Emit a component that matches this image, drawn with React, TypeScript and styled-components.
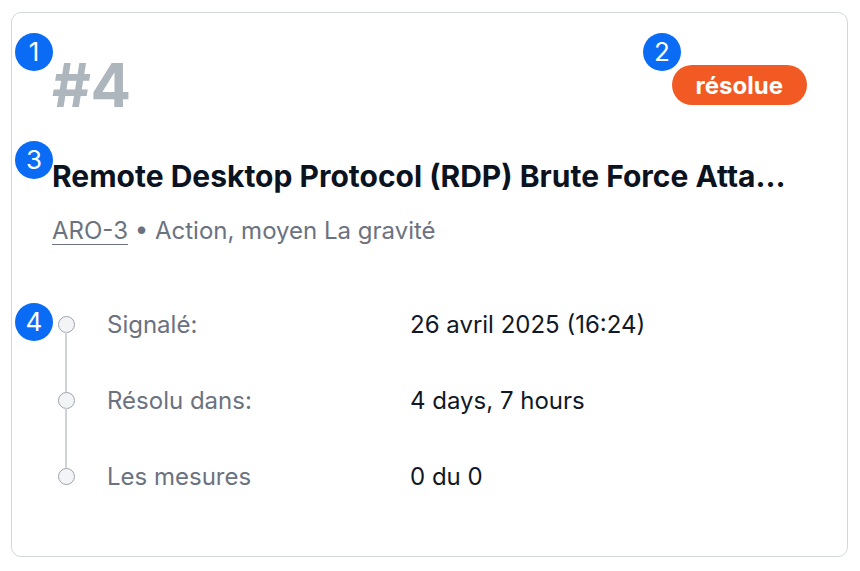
import React from "react"
import styled, { createGlobalStyle } from "styled-components"

const GlobalStyle = createGlobalStyle`
  * { box-sizing: border-box; }
  body {
    margin: 0;
    background: #fff;
    font-family: Inter, "Noto Sans", sans-serif;
  }
`

const Page = styled.div`
  padding: 12px 12px 14px 11px;
`

const Card = styled.article`
  position: relative;
  height: 545px;
  border: 1px solid #d4d7db;
  border-radius: 10px;
  background: #fff;
  padding: 42px 40px 40px 40px;
`

const Header = styled.div`
  display: flex;
  align-items: center;
  justify-content: space-between;
`

const Number = styled.div`
  font-size: 60px;
  line-height: 1;
  font-weight: 700;
  color: #adb5bd;
  letter-spacing: -0.5px;
`

const Status = styled.span`
  display: inline-flex;
  align-items: center;
  height: 40px;
  padding: 0 24px;
  border-radius: 20px;
  background: #f25a24;
  color: #fff;
  font-size: 24px;
  font-weight: 700;
`

const Title = styled.h2`
  margin: 44px 0 0;
  padding-right: 16px;
  font-size: 30px;
  line-height: 35px;
  font-weight: 700;
  color: #0b1220;
  white-space: nowrap;
  overflow: hidden;
  text-overflow: ellipsis;
`

const Meta = styled.p`
  margin: 22px 0 0;
  font-size: 24px;
  line-height: 30px;
  color: #6b7280;
`

const Ref = styled.a`
  color: #6b7280;
  text-decoration: underline;
  text-underline-offset: 5px;
  text-decoration-thickness: 1px;
`

const Timeline = styled.div`
  margin-top: 40px;
`

const Row = styled.div`
  display: grid;
  grid-template-columns: 17px 271px 1fr;
  column-gap: 32px;
  align-items: center;
  height: 76px;
  padding-left: 6px;
  font-size: 24px;
`

const Dot = styled.span<{ $last?: boolean }>`
  position: relative;
  width: 17px;
  height: 17px;
  border: 1.5px solid #9ca3af;
  border-radius: 50%;
  background: #f3f4f6;

  &::after {
    content: "";
    display: ${(p) => (p.$last ? "none" : "block")};
    position: absolute;
    left: 6px;
    top: 15.5px;
    width: 2px;
    height: 60px;
    background: #cfd3d8;
  }
`

const Label = styled.span`
  color: #6b7280;
`

const Value = styled.span`
  color: #111827;
`

const Marker = styled.span<{ $x: number; $y: number }>`
  position: absolute;
  left: ${(p) => p.$x}px;
  top: ${(p) => p.$y}px;
  width: 38px;
  height: 38px;
  border-radius: 50%;
  background: #0a6cf5;
  color: #fff;
  font-size: 26px;
  line-height: 38px;
  text-align: center;
  z-index: 2;
`

const rows = [
  { label: "Signalé:", value: "26 avril 2025 (16:24)" },
  { label: "Résolu dans:", value: "4 days, 7 hours" },
  { label: "Les mesures", value: "0 du 0" },
]

export default function App() {
  return (
    <Page>
      <GlobalStyle />
      <Card>
        <Header>
          <Number>#4</Number>
          <Status>résolue</Status>
        </Header>
        <Title>Remote Desktop Protocol (RDP) Brute Force Attack Detected on Server</Title>
        <Meta>
          <Ref>ARO-3</Ref> • Action, moyen La gravité
        </Meta>
        <Timeline>
          {rows.map((r, i) => (
            <Row key={r.label}>
              <Dot $last={i === rows.length - 1} />
              <Label>{r.label}</Label>
              <Value>{r.value}</Value>
            </Row>
          ))}
        </Timeline>
        <Marker $x={3} $y={20}>1</Marker>
        <Marker $x={631} $y={20}>2</Marker>
        <Marker $x={3} $y={128}>3</Marker>
        <Marker $x={3} $y={290}>4</Marker>
      </Card>
    </Page>
  )
}
